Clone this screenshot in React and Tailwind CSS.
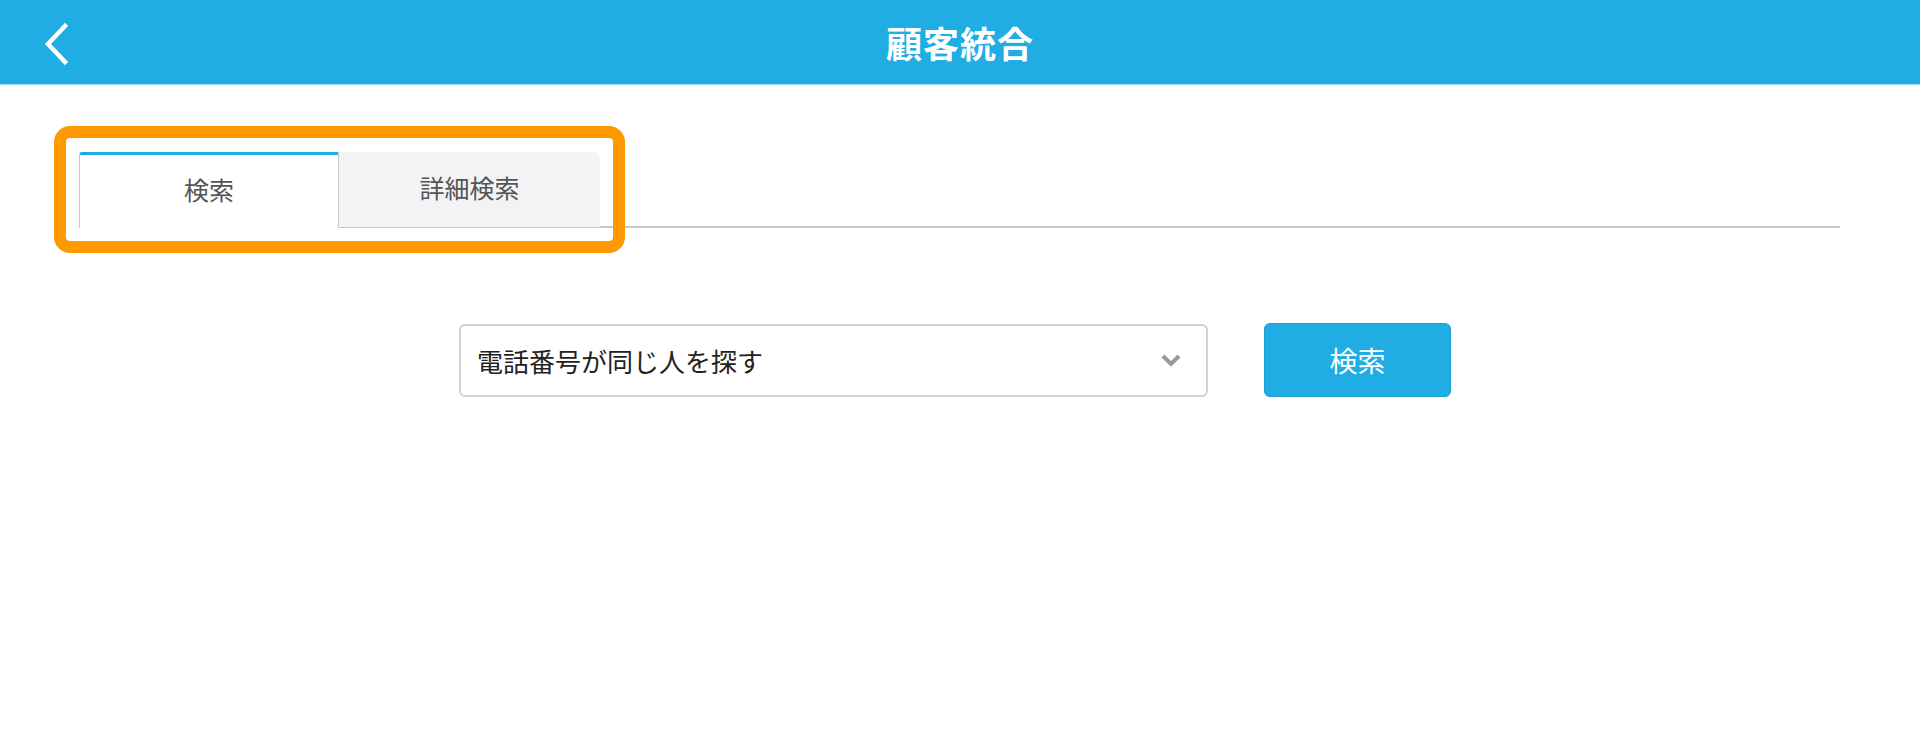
import React from 'react'

const font = { fontFamily: '"Noto Sans CJK JP", "Noto Sans", sans-serif' }

const App = () => {
  return (
    <div className="w-[1920px] h-[740px] bg-white" style={font}>
      {/* ヘッダー */}
      <header className="relative h-[85px] bg-[#1fade4] border-b border-[#9fdcf3] flex items-center justify-center">
        <button className="absolute left-[43px] top-[23px] w-[26px] h-[42px] flex items-center justify-center">
          <svg width="26" height="42" viewBox="0 0 26 42" fill="none">
            <path d="M22 3 L5 21 L22 39" stroke="#fff" strokeWidth="4.5" strokeLinecap="square" />
          </svg>
        </button>
        <h1 className="text-[36px] font-bold text-white leading-none tracking-[1px]">顧客統合</h1>
      </header>

      {/* タブ */}
      <div className="relative pl-[79px] pr-[80px] pt-[67px]">
        <div className="flex items-end">
          <div className="w-[259px] h-[76px] bg-white border-t-[3px] border-t-[#1fade4] border-l border-l-[#c8c8c8] rounded-tl-[3px] flex items-center justify-center">
            <span className="text-[25px] text-[#555] -mt-[3px]">検索</span>
          </div>
          <div className="w-[262px] h-[76px] bg-[#f2f3f5] border-l border-b border-[#c8c8c8] rounded-tr-[8px] flex items-center justify-center">
            <span className="text-[25px] text-[#555] -mt-[3px]">詳細検索</span>
          </div>
          <div className="flex-1 border-b-2 border-[#c8c8c8]" />
        </div>
        {/* 強調枠 */}
        <div className="absolute left-[54px] top-[41px] w-[571px] h-[127px] border-[12px] border-[#ff9900] rounded-[16px] pointer-events-none" />
      </div>

      {/* 検索条件 */}
      <div className="flex justify-center items-center gap-[56px] pt-[95px] pr-[10px]">
        <div className="w-[749px] h-[73px] border-2 border-[#d0d0d0] rounded-[6px] flex items-center justify-between pl-[16px] pr-[24px]">
          <span className="text-[26px] text-[#222]">電話番号が同じ人を探す</span>
          <svg width="22" height="14" viewBox="0 0 22 14" fill="none">
            <path d="M3 3 L11 11 L19 3" stroke="#999" strokeWidth="4" />
          </svg>
        </div>
        <button className="w-[187px] h-[74px] bg-[#1fade4] border border-[#1b9fd2] rounded-[6px] flex items-center justify-center">
          <span className="text-[28px] text-white">検索</span>
        </button>
      </div>
    </div>
  )
}

export default App
